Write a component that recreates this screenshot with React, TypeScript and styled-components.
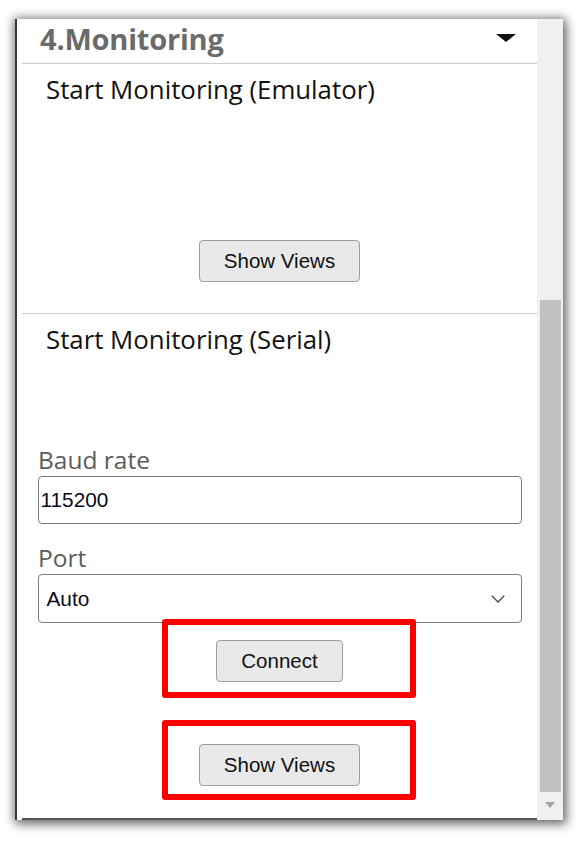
import styled, { createGlobalStyle } from 'styled-components';

const GlobalStyle = createGlobalStyle`
  html, body {
    margin: 0;
    padding: 0;
    background: #fff;
  }
  body {
    font-family: 'Open Sans', 'Noto Sans', sans-serif;
  }
`;

const Stage = styled.div`
  width: 580px;
  height: 843px;
  padding: 19px 0 0 15px;
  box-sizing: border-box;
  overflow: hidden;
`;

const Window = styled.div`
  display: flex;
  width: 548px;
  height: 801px;
  background: #fff;
  border-left: 2px solid #3a3a3a;
  box-sizing: border-box;
  box-shadow:
    0 0 9px 2px rgb(0 0 0 / 0.38),
    3px 4px 10px 1px rgb(0 0 0 / 0.35);
`;

const Panel = styled.div`
  flex: 1;
  display: flex;
  flex-direction: column;
  padding-left: 5px;
  min-width: 0;
`;

const Header = styled.div`
  display: flex;
  align-items: flex-start;
  justify-content: space-between;
  height: 45px;
  box-sizing: border-box;
  padding: 1px 21px 0 18px;
  border-bottom: 1px solid #cdcdcd;
`;

const HeaderTitle = styled.div`
  font-weight: 700;
  font-size: 29px;
  line-height: 38px;
  letter-spacing: -0.2px;
  color: #6b6b6b;
`;

const Caret = styled.span`
  margin-top: 14px;
  width: 0;
  height: 0;
  border-left: 10px solid transparent;
  border-right: 10px solid transparent;
  border-top: 8px solid #111;
`;

const Section = styled.section<{ $height?: number; $last?: boolean }>`
  display: flex;
  flex-direction: column;
  box-sizing: border-box;
  padding-top: 8px;
  ${(p) => (p.$height ? `height: ${p.$height}px;` : 'flex: 1;')}
  border-bottom: ${(p) => (p.$last ? '2px solid #555' : '1px solid #cdcdcd')};
`;

const SectionTitle = styled.div`
  padding-left: 24px;
  font-size: 25.8px;
  line-height: 34px;
  color: #111;
`;

const FieldLabel = styled.label<{ $gap: number }>`
  display: block;
  margin: ${(p) => p.$gap}px 15px 0 16px;
  font-size: 24.5px;
  line-height: 32px;
  color: #5c5c5c;
`;

const Control = styled.div`
  display: flex;
  align-items: center;
  justify-content: space-between;
  margin: 0 15px 0 16px;
  box-sizing: border-box;
  border: 1.5px solid #7c7c7c;
  border-radius: 4px;
  font-family: 'Liberation Sans', Arial, sans-serif;
  font-size: 20.8px;
  color: #0a0a1a;
`;

const TextField = styled(Control)`
  height: 48px;
  padding-left: 1.5px;
`;

const SelectField = styled(Control)`
  height: 49px;
  padding: 0 16px 0 7.5px;
`;

const ButtonRow = styled.div<{ $pad: number; $height?: number }>`
  position: relative;
  display: flex;
  justify-content: center;
  align-items: flex-start;
  padding-top: ${(p) => p.$pad}px;
  ${(p) => (p.$height ? `height: ${p.$height}px; box-sizing: border-box;` : '')}
`;

const PushButton = styled.button`
  height: 42px;
  padding: 0 24px;
  box-sizing: border-box;
  background: #e9e9e9;
  border: 1px solid #9e9e9e;
  border-radius: 4px;
  font-family: 'Liberation Sans', Arial, sans-serif;
  font-size: 20.5px;
  color: #111;
`;

const Highlight = styled.div<{ $top: number; $height: number }>`
  position: absolute;
  left: 140px;
  top: ${(p) => p.$top}px;
  width: 254px;
  height: ${(p) => p.$height}px;
  box-sizing: border-box;
  border: 6px solid #ff0000;
  border-radius: 3px;
  pointer-events: none;
`;

const Spacer = styled.div`
  flex: 1;
`;

const Scrollbar = styled.div`
  display: flex;
  flex-direction: column;
  width: 26px;
  flex-shrink: 0;
  background: #f0f0f0;
  padding-top: 281px;
  box-sizing: border-box;
`;

const Thumb = styled.div`
  height: 492px;
  margin: 0 2px 0 3px;
  background: #c1c1c1;
`;

const ArrowBox = styled.div`
  flex: 1;
  display: flex;
  justify-content: center;
  padding-top: 10px;
`;

const DownArrow = styled.span`
  width: 0;
  height: 0;
  border-left: 5px solid transparent;
  border-right: 5px solid transparent;
  border-top: 6px solid #a3a3a3;
`;

function Chevron() {
  return (
    <svg width="14" height="8" viewBox="0 0 14 8" fill="none">
      <polyline points="0.8,0.8 7,7 13.2,0.8" stroke="#444" strokeWidth="1.3" />
    </svg>
  );
}

export default function App() {
  return (
    <>
      <GlobalStyle />
      <Stage>
        <Window>
          <Panel>
            <Header>
              <HeaderTitle>4.Monitoring</HeaderTitle>
              <Caret />
            </Header>

            <Section $height={250}>
              <SectionTitle>Start Monitoring (Emulator)</SectionTitle>
              <Spacer />
              <ButtonRow $pad={0} style={{ paddingBottom: 31 }}>
                <PushButton>Show Views</PushButton>
              </ButtonRow>
            </Section>

            <Section $last>
              <SectionTitle>Start Monitoring (Serial)</SectionTitle>
              <FieldLabel $gap={88}>Baud rate</FieldLabel>
              <TextField>115200</TextField>
              <FieldLabel $gap={18}>Port</FieldLabel>
              <SelectField>
                <span>Auto</span>
                <Chevron />
              </SelectField>
              <ButtonRow $pad={17} $height={75}>
                <PushButton>Connect</PushButton>
                <Highlight $top={-4} $height={79} />
              </ButtonRow>
              <ButtonRow $pad={46}>
                <PushButton>Show Views</PushButton>
                <Highlight $top={22} $height={80} />
              </ButtonRow>
            </Section>
          </Panel>
          <Scrollbar>
            <Thumb />
            <ArrowBox>
              <DownArrow />
            </ArrowBox>
          </Scrollbar>
        </Window>
      </Stage>
    </>
  );
}
